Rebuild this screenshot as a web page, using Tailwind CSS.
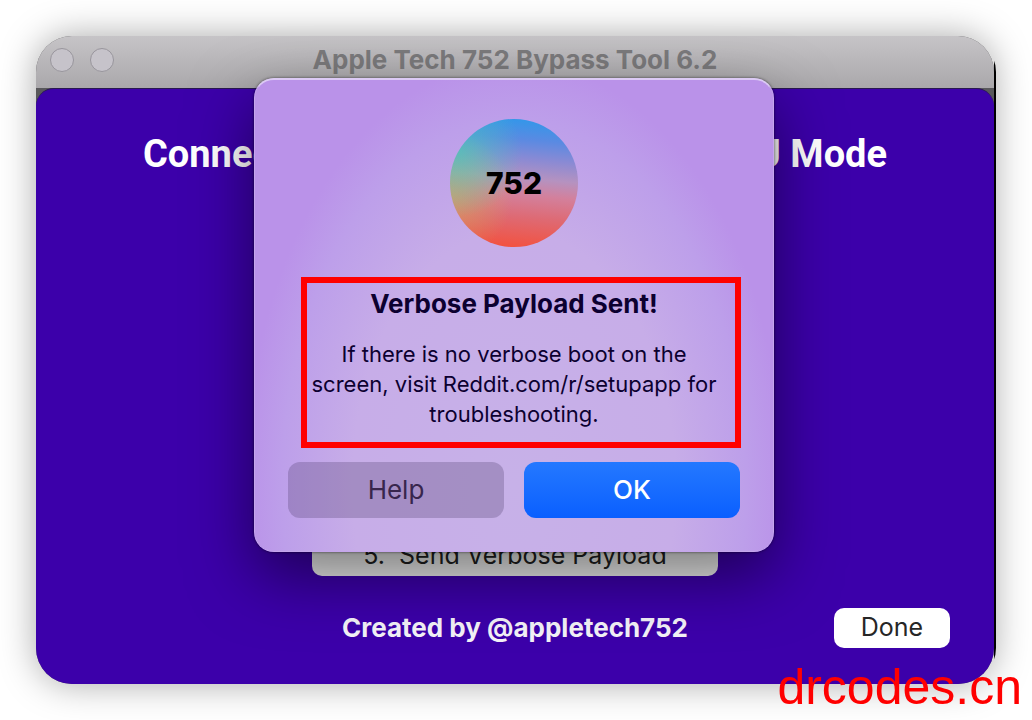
<!DOCTYPE html>
<html lang="en">
<head>
<meta charset="utf-8">
<meta name="viewport" content="width=device-width, initial-scale=1">
<title>Apple Tech 752 Bypass Tool 6.2</title>
<script src="https://cdn.jsdelivr.net/npm/@tailwindcss/browser@4"></script>
</head>
<body class="relative flex min-h-screen overflow-x-hidden bg-white p-9 font-['Inter','Liberation_Sans',sans-serif]">

<div class="relative flex flex-1 rounded-[36px] bg-[linear-gradient(to_bottom,transparent_24px,#000_24px,#000_calc(100%-24px),transparent_calc(100%-24px))] bg-[length:2px_100%] bg-right bg-no-repeat pr-0.5">
  <div class="flex flex-1 flex-col overflow-hidden rounded-[36px] bg-[#59585b] shadow-[0_0_36px_rgba(0,0,0,0.34)]">
    <header class="flex h-[52px] shrink-0 items-center bg-linear-to-b from-[#c6c4c7] to-[#aaa8ab] px-3.5 pb-[5px]">
      <div class="flex flex-1 gap-4">
        <button type="button" aria-label="Close" class="size-6 rounded-full border border-[#98959c] bg-[#c6c3ca]"></button>
        <button type="button" aria-label="Minimize" class="size-6 rounded-full border border-[#98959c] bg-[#c6c3ca]"></button>
      </div>
      <h1 class="text-[26px] leading-8 font-bold whitespace-nowrap text-[#7b7a7c]">Apple Tech 752 Bypass Tool 6.2</h1>
      <div class="flex-1"></div>
    </header>

    <main class="flex flex-1 flex-col rounded-t-[18px] border-t border-[#2a1a50] bg-[#3c00aa] px-11 pt-[39px] pb-9">
      <h2 class="flex justify-between px-[63px] font-['Roboto',sans-serif] text-[38px] leading-[52px] font-bold text-white"><span>Connect</span><span>DFU Mode</span></h2>
      <div class="mt-auto flex justify-center">
        <button type="button" class="h-10 w-[406px] rounded-[10px] bg-[#eeeeee] text-[25px] whitespace-pre text-[#202020]">5.  Send Verbose Payload</button>
      </div>
      <div class="mt-8 grid grid-cols-[1fr_auto_1fr] items-center">
        <p class="col-start-2 text-[26px] leading-8 font-bold whitespace-nowrap text-[#f4f2f8]">Created by @appletech752</p>
        <button type="button" class="h-10 w-[116px] justify-self-end rounded-[10px] bg-white text-[25px] text-[#262626]">Done</button>
      </div>
    </main>
  </div>

  <div class="absolute inset-x-0 top-[42px] flex justify-center pr-1">
    <section role="dialog" aria-labelledby="alert-title" class="flex w-[520px] flex-col items-center rounded-[20px] border border-t-2 border-[#c5a6ec] border-t-[#dccaf5] bg-[radial-gradient(ellipse_52%_90%_at_50%_86%,#c7b1e8_0%,#c7ade8_60%,#bd9fea_86%,#ba92e9_100%)] px-[33px] pt-[39px] pb-[33px] shadow-[0_0_3px_rgba(0,0,0,0.6),0_24px_64px_rgba(0,0,0,0.5)]">
      <div class="flex size-32 items-center justify-center rounded-full bg-[radial-gradient(circle_at_6%_26%,#40d0b8aa,transparent_42%),radial-gradient(circle_at_0%_60%,#d0b060aa,transparent_42%),linear-gradient(185deg,#2f98ea_2%,#5a8ae2_18%,#8a8ad4_32%,#b592c0_46%,#d3809c_58%,#de6a74_74%,#f4503c_98%)]">
        <span class="text-[30px] font-extrabold text-black">752</span>
      </div>
      <div class="mt-[30px] -mr-px w-[440px] self-end border-6 border-[#ff0000] pt-[5px] pr-3.5 pb-[13px] text-center whitespace-nowrap text-[#0c0030]">
        <h3 id="alert-title" class="text-[26px] leading-8 font-bold">Verbose Payload Sent!</h3>
        <p class="mt-[19px] text-[22px] leading-[30px]">If there is no verbose boot on the<br>screen, visit Reddit.com/r/setupapp for<br>troubleshooting.</p>
      </div>
      <div class="mt-3.5 grid w-full grid-cols-2 gap-5">
        <button type="button" class="h-14 rounded-xl bg-[#4b3a68]/28 pb-0.5 text-[26px] text-[#38264d]">Help</button>
        <button type="button" class="h-14 rounded-xl bg-linear-to-b from-[#2478ff] to-[#0a5fff] pb-0.5 text-[26px] font-medium text-white">OK</button>
      </div>
    </section>
  </div>
</div>

<a href="https://drcodes.cn" class="absolute right-2.5 bottom-[5px] font-['Liberation_Sans',sans-serif] text-[50px] leading-[56px] text-[#ff0000]">drcodes.cn</a>
</body>
</html>
